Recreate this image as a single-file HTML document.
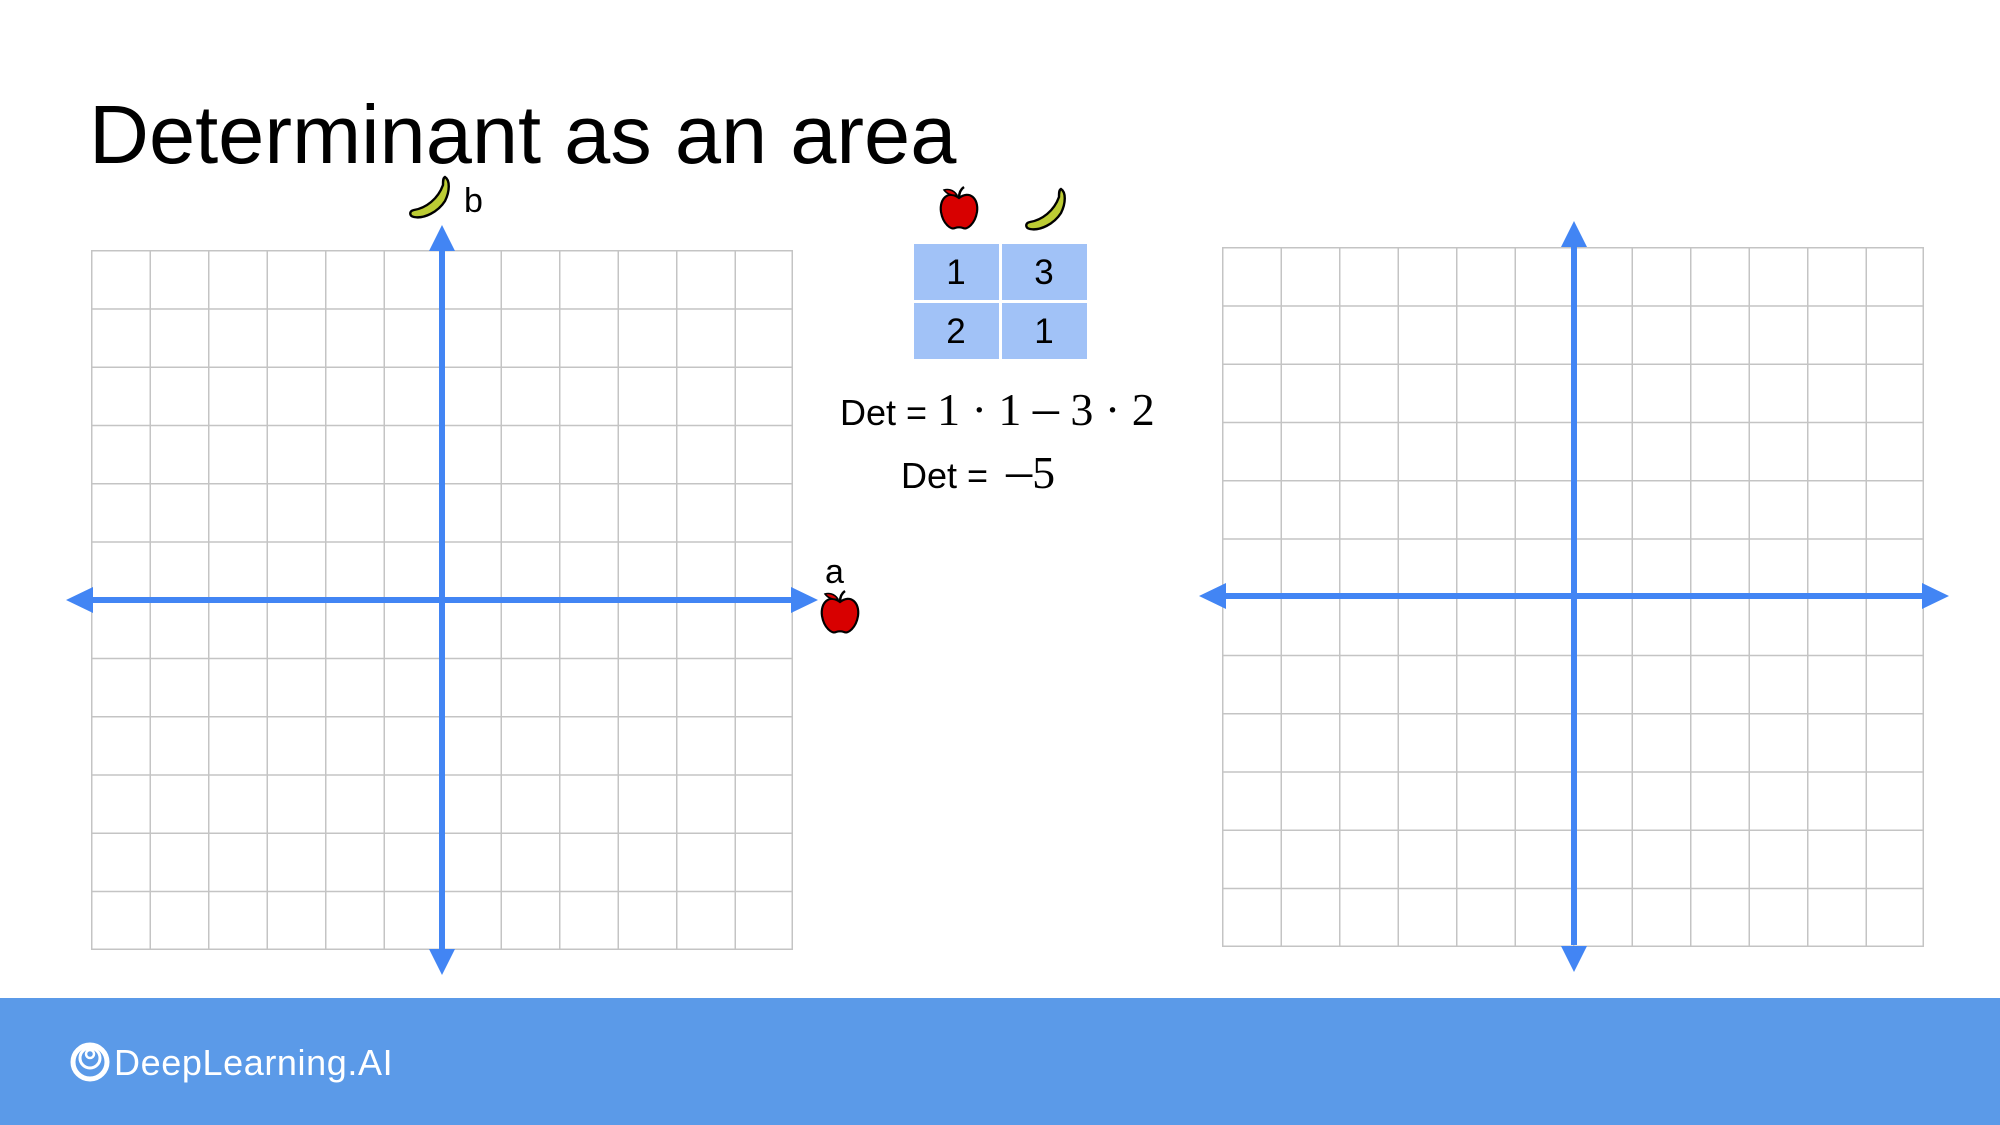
<!DOCTYPE html>
<html><head><meta charset="utf-8"><style>
html,body{margin:0;padding:0;background:#fff;width:2000px;height:1125px;overflow:hidden;font-family:"Liberation Sans",sans-serif}
</style></head><body>
<svg width="2000" height="1125" viewBox="0 0 2000 1125" xmlns="http://www.w3.org/2000/svg">
<defs>
<pattern id="gL" x="91" y="250" width="58.5" height="58.25" patternUnits="userSpaceOnUse">
<path d="M0.75 0V58.25M0 0.75H58.5" stroke="#c4c4c4" stroke-width="1.5" fill="none"/></pattern>
<pattern id="gR" x="1222" y="247" width="58.5" height="58.25" patternUnits="userSpaceOnUse">
<path d="M0.75 0V58.25M0 0.75H58.5" stroke="#c4c4c4" stroke-width="1.5" fill="none"/></pattern>
<g id="apple"><path d="M20 12 C10 4 0 12 2 26 C4 38 12 44 16 42 C19 41 21 41 24 42 C28 44 36 38 38 26 C40 12 30 4 20 12Z" fill="#d80000" stroke="#000" stroke-width="2.2"/><path d="M20 12 C20 6 22 3 25 1" stroke="#000" stroke-width="2.5" fill="none"/><path d="M18 9 C14 3 8 3 5 4 C8 8 13 10 18 9Z" fill="#d80000" stroke="#000" stroke-width="1.5"/></g>
<g id="banana"><path d="M36 2 C41 5 41 16 36 26 C29 37 15 44 5 42 C0 41 0 36 5 35 C17 33 29 24 34 10 C34 6 34 3 36 2Z" fill="#bccc34" stroke="#000" stroke-width="2.4"/></g>
</defs>
<text x="89" y="163" font-size="83" fill="#000">Determinant as an area</text>
<rect x="91" y="250" width="702" height="699" fill="url(#gL)"/>
<path d="M91 949.25H793M792.25 250V949" stroke="#c4c4c4" stroke-width="1.5"/>
<rect x="1222" y="247" width="702" height="699" fill="url(#gR)"/>
<path d="M1222 946.25H1924M1923.25 247V946" stroke="#c4c4c4" stroke-width="1.5"/>
<g fill="#4285f4" stroke="none">
<rect x="439" y="250" width="6" height="700"/>
<polygon points="442,225 429,251 455,251"/>
<polygon points="442,975 429,949 455,949"/>
<rect x="92" y="597" width="700" height="6"/>
<polygon points="66,600 93,587 93,613"/>
<polygon points="818,600 791,587 791,613"/>
<rect x="1571" y="245" width="6" height="700"/>
<polygon points="1574,221 1561,247 1587,247"/>
<polygon points="1574,972 1561,946 1587,946"/>
<rect x="1224" y="593" width="700" height="6"/>
<polygon points="1199,596 1226,583 1226,609"/>
<polygon points="1949,596 1922,583 1922,609"/>
</g>
<use href="#banana" x="409" y="175"/>
<text x="464" y="212" font-size="34">b</text>
<text x="825" y="583" font-size="34">a</text>
<use href="#apple" x="820" y="590"/>
<use href="#apple" x="939" y="186"/>
<use href="#banana" x="1025" y="187"/>
<g fill="#a1c2f7"><rect x="914" y="244" width="85" height="56"/><rect x="1002" y="244" width="85" height="56"/><rect x="914" y="303" width="85" height="56"/><rect x="1002" y="303" width="85" height="56"/></g>
<g font-size="35" text-anchor="middle"><text x="956" y="284">1</text><text x="1044" y="284">3</text><text x="956" y="343">2</text><text x="1044" y="343">1</text></g>
<text x="840" y="425" font-size="36">Det = <tspan font-family="Liberation Serif" font-size="46">1 · 1 <tspan font-size="52">–</tspan> 3 · 2</tspan></text>
<text x="901" y="488" font-size="36">Det = <tspan font-family="Liberation Serif" font-size="46" dx="8"><tspan font-size="52">–</tspan>5</tspan></text>
<rect x="0" y="998" width="2000" height="127" fill="#5b9ae8"/>
<g fill="none" stroke="#fff"><circle cx="90" cy="1062" r="17" stroke-width="5"/><circle cx="90" cy="1058" r="10" stroke-width="3"/><circle cx="90" cy="1054" r="4" stroke-width="2.5"/></g>
<text x="114" y="1075" font-size="36" letter-spacing="0.6" fill="#fff">DeepLearning.AI</text>
</svg>
</body></html>
